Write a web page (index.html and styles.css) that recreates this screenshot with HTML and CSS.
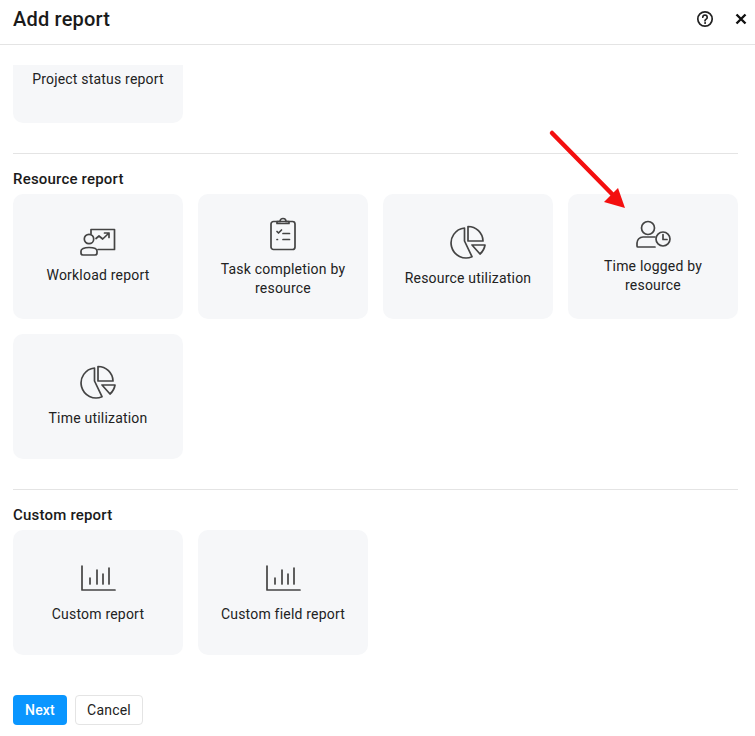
FILE: index.html
```html
<!DOCTYPE html>
<html lang="en">
<head>
    <meta charset="UTF-8">
    <meta name="viewport" content="width=device-width, initial-scale=1.0">
    <title>Add report</title>
    <link rel="stylesheet" href="styles.css">
</head>
<body>

<div class="dialog">
    <header class="dialog-header">
        <h1 class="dialog-title">Add report</h1>
        <div class="dialog-actions">
            <svg class="icon-help" width="18" height="18" viewBox="0 0 18 18" fill="none" stroke="#222" stroke-width="1.7" stroke-linecap="round">
                <circle cx="9" cy="9" r="7.2"/>
                <path d="M6.8 7.2a2.2 2.2 0 1 1 3.4 1.9c-.8.5-1.2.9-1.2 1.7"/>
                <circle cx="9" cy="13" r=".5" fill="#222" stroke-width="1"/>
            </svg>
            <svg class="icon-close" width="14" height="14" viewBox="0 0 14 14" fill="none" stroke="#111" stroke-width="2.4">
                <path d="M2.5 2.5l9 9M11.5 2.5l-9 9"/>
            </svg>
        </div>
    </header>

    <main class="dialog-body">
        <div class="card-grid">
            <div class="card card-cut">
                <span class="card-label">Project status report</span>
            </div>
        </div>

        <hr class="divider">
        <h2 class="section-title">Resource report</h2>
        <div class="card-grid">
            <div class="card">
                <svg class="card-icon" width="36" height="30" viewBox="0 0 36 30">
                    <path d="M11 6V1.500h23.500V21.500H18"/>
                    <circle cx="9" cy="11" r="4.700"/>
                    <path d="M3.500 27h11.500a2 2 0 0 0 2-2v-2c0-2-3-3.500-8-3.500s-8 1.500-8 3.500v2a2 2 0 0 0 2 2z"/>
                    <path d="M16 10.500l3-2.500 3.700 3L29 5M24.500 5H29v4.500"/>
                </svg>
                <span class="card-label">Workload report</span>
            </div>
            <div class="card">
                <svg class="card-icon" width="36" height="36" viewBox="0 0 36 36">
                    <rect x="6" y="5.500" width="24" height="28" rx="2.500"/>
                    <path d="M12 7.500V5.500h3a3 3 0 1 1 6 0h3v2z"/>
                    <path d="M12 15.500l1.500 1.500 3-3M18 17.500h6.500M18 23.500h6.500M12 23.500h.5"/>
                </svg>
                <span class="card-label">Task completion by resource</span>
            </div>
            <div class="card">
                <svg class="card-icon" width="36" height="36" viewBox="0 0 36 36">
                    <path d="M14.500 3A15 15 0 1 0 22 31.700L14.500 16z"/>
                    <path d="M18 1.500A15 15 0 0 1 33 16H18z"/>
                    <path d="M22 20H35A15 15 0 0 1 30 29z"/>
                </svg>
                <span class="card-label">Resource utilization</span>
            </div>
            <div class="card">
                <svg class="card-icon" width="36" height="30" viewBox="0 0 36 30">
                    <circle cx="13" cy="9" r="6.500"/>
                    <path d="M20 18H8a6 6 0 0 0-6 6v3a1 1 0 0 0 1 1h17"/>
                    <circle cx="28" cy="20" r="7"/>
                    <path d="M28 15.500v5h4"/>
                </svg>
                <span class="card-label">Time logged by resource</span>
            </div>
            <div class="card">
                <svg class="card-icon" width="36" height="36" viewBox="0 0 36 36">
                    <path d="M14.500 3A15 15 0 1 0 22 31.700L14.500 16z"/>
                    <path d="M18 1.500A15 15 0 0 1 33 16H18z"/>
                    <path d="M22 20H35A15 15 0 0 1 30 29z"/>
                </svg>
                <span class="card-label">Time utilization</span>
            </div>
        </div>

        <hr class="divider">
        <h2 class="section-title">Custom report</h2>
        <div class="card-grid">
            <div class="card">
                <svg class="card-icon" width="36" height="36" viewBox="0 0 36 36">
                    <path d="M2 5V29H35"/>
                    <path d="M10 17V23M17 9V23M23 13V23M29 7V23"/>
                </svg>
                <span class="card-label">Custom report</span>
            </div>
            <div class="card">
                <svg class="card-icon" width="36" height="36" viewBox="0 0 36 36">
                    <path d="M2 5V29H35"/>
                    <path d="M10 17V23M17 9V23M23 13V23M29 7V23"/>
                </svg>
                <span class="card-label">Custom field report</span>
            </div>
        </div>
    </main>

    <footer class="dialog-footer">
        <button class="btn btn-primary">Next</button>
        <button class="btn btn-default">Cancel</button>
    </footer>

    <!-- annotation drawn on top of the dialog -->
    <svg class="arrow" width="90" height="90" viewBox="0 0 90 90">
        <path d="M5 6L66 68" stroke="#f40f0f" stroke-width="4.500" stroke-linecap="round"/>
        <path d="M78 81L57 75L71 61z" fill="#f40f0f"/>
    </svg>
</div>

</body>
</html>
```

FILE: styles.css
```css
* {
    box-sizing: border-box;
}
body {
    margin: 0;
    background-color: #fff;
    font-family: Roboto, Arial, sans-serif;
    color: #222;
}
.dialog {
    position: relative;
    height: 736px;
    overflow: hidden;
}
.dialog-header {
    display: flex;
    justify-content: space-between;
    align-items: center;
    height: 45px;
    padding: 0 7px 6px 13px;
    border-bottom: 1px solid #e4e4e4;
}
.dialog-title {
    margin: 0;
    font-size: 20px;
    font-weight: 500;
    letter-spacing: 0.2px;
    color: #1a1a1a;
}
.dialog-actions {
    display: flex;
    align-items: center;
    gap: 20px;
}
.dialog-body {
    padding: 20px 17px 0 13px;
}
.card-grid {
    display: grid;
    grid-template-columns: repeat(4, 170px);
    gap: 15px;
}
.card {
    display: flex;
    flex-direction: column;
    align-items: center;
    justify-content: center;
    gap: 8px;
    height: 125px;
    padding: 0 15px;
    border-radius: 10px;
    background-color: #f6f7f9;
}
.card-cut {
    justify-content: flex-start;
    height: 58px;
    padding-top: 5px;
    border-radius: 0 0 10px 10px;
}
.card-icon {
    flex: none;
    fill: none;
    stroke: #444;
    stroke-width: 1.700;
    stroke-linecap: round;
    stroke-linejoin: round;
}
.card-label {
    font-size: 14px;
    line-height: 19px;
    letter-spacing: 0.2px;
    text-align: center;
}
.divider {
    height: 1px;
    margin: 30px 0 0;
    border: none;
    background-color: #e4e4e4;
}
.section-title {
    margin: 0;
    padding: 15px 0 4px;
    font-size: 15px;
    line-height: 21px;
    font-weight: 500;
    letter-spacing: 0.2px;
    color: #1a1a1a;
}
.dialog-footer {
    display: flex;
    gap: 8px;
    padding: 40px 13px 0;
}
.btn {
    height: 30px;
    border-radius: 4px;
    font-family: inherit;
    font-size: 14px;
    letter-spacing: 0.2px;
}
.btn-primary {
    width: 54px;
    border: none;
    background-color: #0a96ff;
    color: #fff;
    font-weight: 500;
}
.btn-default {
    width: 68px;
    border: 1px solid #e4e4e4;
    background-color: #fff;
    color: #222;
}
.arrow {
    position: absolute;
    top: 127px;
    left: 547px;
}
```
